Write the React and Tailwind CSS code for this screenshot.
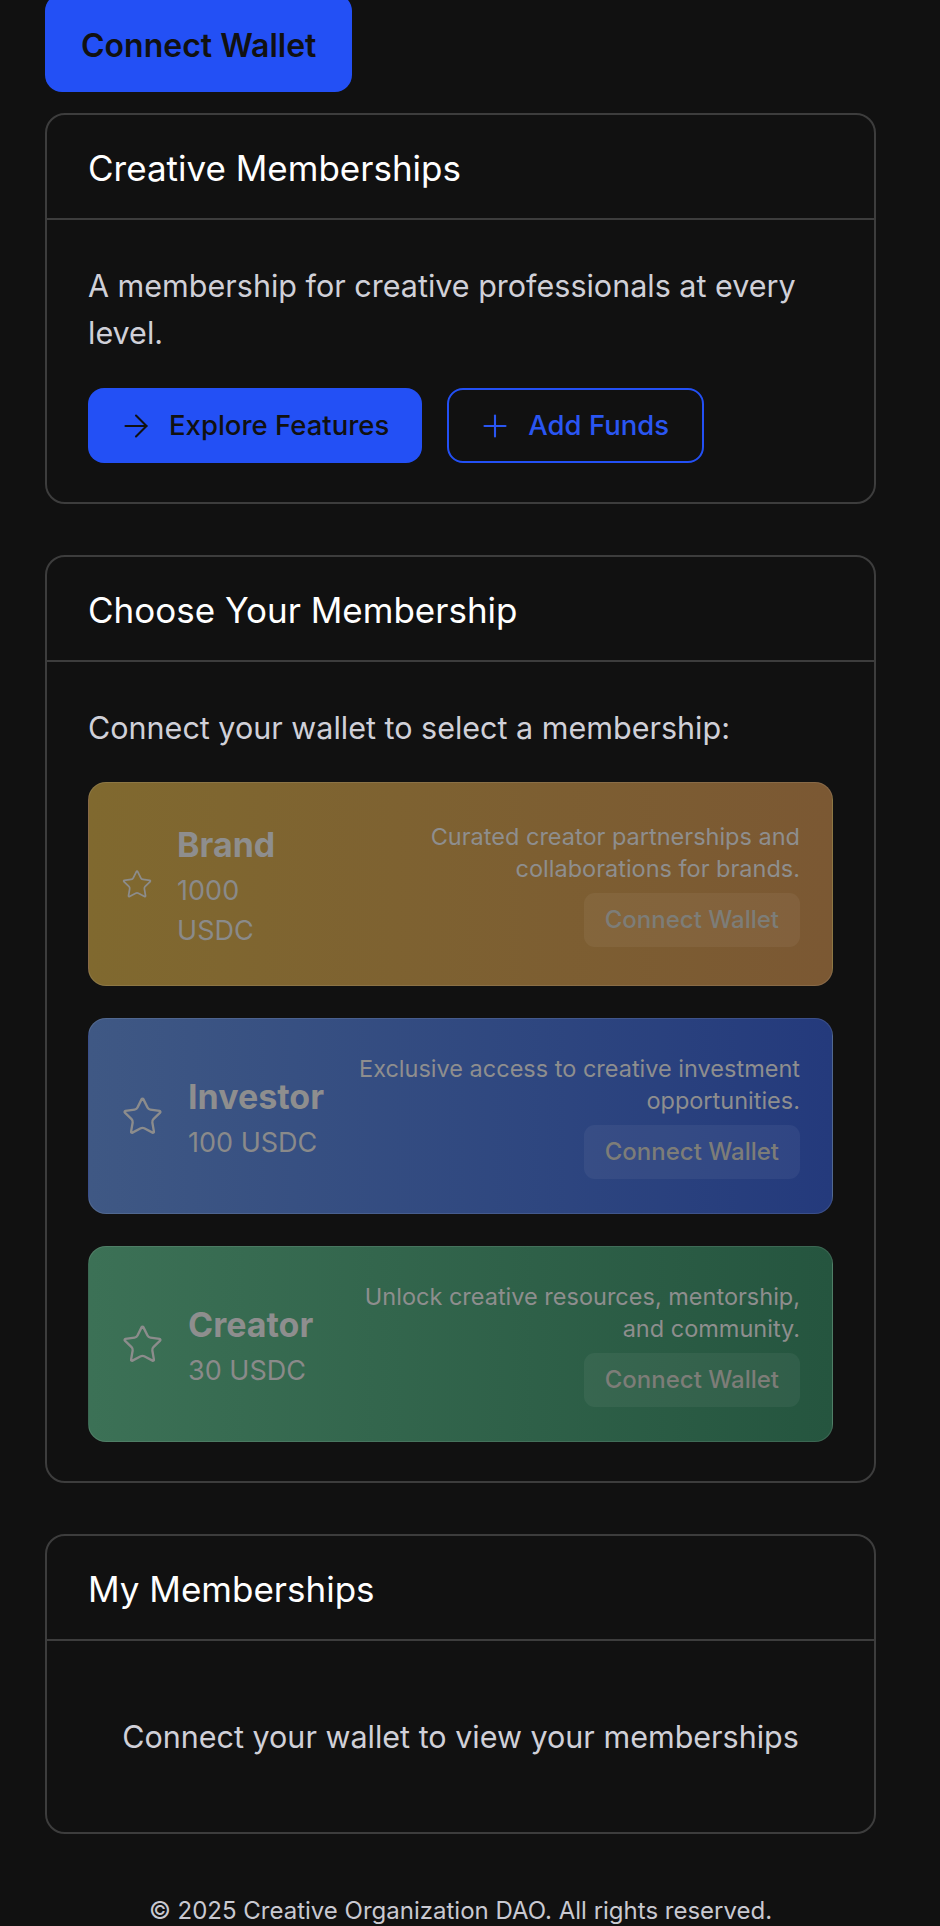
import { ArrowRight, Plus, Star } from 'lucide-react'

const tiers = [
  {
    name: 'Brand',
    price: '1000 USDC',
    description: 'Curated creator partnerships and collaborations for brands.',
    bg: 'bg-linear-to-r from-[#80692f] to-[#7b5833]',
  },
  {
    name: 'Investor',
    price: '100 USDC',
    description: 'Exclusive access to creative investment opportunities.',
    bg: 'bg-linear-to-r from-[#3f5884] to-[#243a7c]',
  },
  {
    name: 'Creator',
    price: '30 USDC',
    description: 'Unlock creative resources, mentorship, and community.',
    bg: 'bg-linear-to-r from-[#3c7156] to-[#25553f]',
  },
]

function Card({ title, children }) {
  return (
    <section className="rounded-[20px] border-2 border-[#3d3d3d] bg-[#111111]">
      <div className="border-b-2 border-[#3d3d3d] px-[41px] pt-[31px] pb-[28px]">
        <h2 className="text-[35px] leading-[44px] font-normal text-white">{title}</h2>
      </div>
      {children}
    </section>
  )
}

function TierCard({ tier }) {
  return (
    <div className={`flex items-center justify-between gap-4 rounded-[18px] border border-white/10 px-8 py-[34px] ${tier.bg}`}>
      <div className="flex items-center gap-6">
        <Star size={43} strokeWidth={1.3} className="text-[#8c8c8c]" />
        <div className="pt-[8px]">
          <h3 className="text-[34px] leading-[40px] font-bold text-[#8e8e8e]">{tier.name}</h3>
          <p className="mt-[6px] text-[27px] leading-[40px] text-[#8a8a8a]">{tier.price}</p>
        </div>
      </div>
      <div className="flex flex-col items-end gap-2">
        <p className="text-right text-[23.5px] leading-[32px] text-[#8e8e8e]">{tier.description}</p>
        <button className="h-[54px] rounded-[11px] bg-white/5 px-[21px] text-[24px] font-medium text-[#7d7d78]">
          Connect Wallet
        </button>
      </div>
    </div>
  )
}

export default function App() {
  return (
    <div className="min-h-screen bg-[#111111] font-['Inter',sans-serif]">
      <div className="w-[921px] px-[45px]">
        <button className="-mt-[6px] h-[98px] rounded-[17px] bg-[#2350f5] px-[36px] pt-[6px] text-[32px] font-semibold text-[#111111]">
          Connect Wallet
        </button>

        <div className="mt-[21px] flex flex-col gap-[51px]">
          <Card title="Creative Memberships">
            <div className="px-[41px] pt-[42px] pb-[39px]">
              <p className="text-[30.5px] leading-[47px] text-[#d0d0d8]">
                A membership for creative professionals at every level.
              </p>
              <div className="mt-[32px] flex gap-[25px]">
                <button className="flex h-[75px] items-center gap-[15px] rounded-[16px] bg-[#2350f5] pr-[33px] pl-[30px] text-[27.5px] font-medium text-[#111111]">
                  <ArrowRight size={36} strokeWidth={1.4} />
                  Explore Features
                </button>
                <button className="flex h-[75px] items-center gap-[15px] rounded-[16px] border-2 border-[#2350f5] pr-[33px] pl-[28px] text-[27.5px] font-medium text-[#2a56f2]">
                  <Plus size={36} strokeWidth={1.4} />
                  Add Funds
                </button>
              </div>
            </div>
          </Card>

          <Card title="Choose Your Membership">
            <div className="px-[41px] pt-[42px] pb-[39px]">
              <p className="text-[30.5px] leading-[47px] text-[#d0d0d8]">
                Connect your wallet to select a membership:
              </p>
              <div className="mt-[31px] flex flex-col gap-[32px]">
                {tiers.map((tier) => (
                  <TierCard key={tier.name} tier={tier} />
                ))}
              </div>
            </div>
          </Card>

          <Card title="My Memberships">
            <div className="px-[41px] py-[72px] text-center">
              <p className="text-[30.5px] leading-[47px] text-[#d0d0d8]">
                Connect your wallet to view your memberships
              </p>
            </div>
          </Card>
        </div>

        <footer className="mt-[61px] pb-4 text-center text-[24px] leading-[32px] text-[#c9c9d1]">
          © 2025 Creative Organization DAO. All rights reserved.
        </footer>
      </div>
    </div>
  )
}
